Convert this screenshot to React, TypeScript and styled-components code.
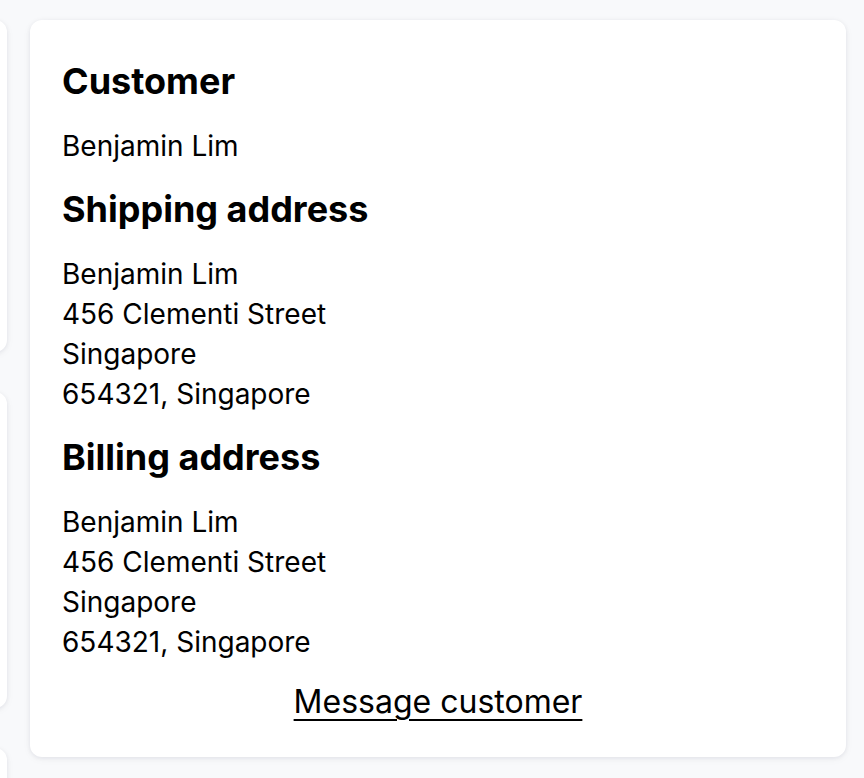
import styled, { createGlobalStyle } from "styled-components"

const GlobalStyle = createGlobalStyle`
html, body {
  margin: 0;
  padding: 0;
  background-color: #f8f9fb;
  font-family: Inter, "Noto Sans", sans-serif;
  color: #000;
}
`

const shipping = ["Benjamin Lim", "456 Clementi Street", "Singapore", "654321, Singapore"]
const billing = ["Benjamin Lim", "456 Clementi Street", "Singapore", "654321, Singapore"]

const App = () => {
    return (
        <>
            <GlobalStyle />
            <Page>
                <SideColumn>
                    <SideCard h={332} />
                    <SideCard h={316} />
                    <SideCard h={200} />
                </SideColumn>
                <Card>
                    <Title>Customer</Title>
                    <Lines>
                        <Line>Benjamin Lim</Line>
                    </Lines>
                    <Title>Shipping address</Title>
                    <Lines>
                        {shipping.map((l, i) => <Line key={i}>{l}</Line>)}
                    </Lines>
                    <Title>Billing address</Title>
                    <Lines>
                        {billing.map((l, i) => <Line key={i}>{l}</Line>)}
                    </Lines>
                    <Footer>
                        <MessageLink href="#">Message customer</MessageLink>
                    </Footer>
                </Card>
            </Page>
        </>
    )
}

export default App

const Page = styled.div`
display: flex;
align-items: flex-start;
gap: 23px;
padding: 20px 18px 0 0;
height: 758px;
overflow: hidden;
`
const SideColumn = styled.div`
width: 200px;
margin-left: -193px;
display: flex;
flex-direction: column;
gap: 40px;
flex-shrink: 0;
`
const SideCard = styled.div<{ h: number }>`
height: ${(p) => p.h}px;
background-color: #fff;
border-radius: 12px;
box-shadow: 0 1px 4px rgba(20, 30, 60, 0.08), 0 2px 10px rgba(20, 30, 60, 0.04);
`
const Card = styled.div`
flex: 1;
background-color: #fff;
border-radius: 12px;
box-shadow: 0 1px 4px rgba(20, 30, 60, 0.08), 0 2px 10px rgba(20, 30, 60, 0.04);
padding: 37px 32px 33px 32px;
display: flex;
flex-direction: column;
`
const Title = styled.h2`
margin: 0;
font-size: 36px;
font-weight: 700;
line-height: 48px;
`
const Lines = styled.div`
display: flex;
flex-direction: column;
padding: 21px 0 19px 0;
`
const Line = styled.div`
font-size: 28px;
line-height: 40px;
`
const Footer = styled.div`
display: flex;
justify-content: center;
margin-top: -1px;
`
const MessageLink = styled.a`
font-size: 32px;
line-height: 44px;
color: #000;
text-decoration: underline;
text-underline-offset: 6px;
text-decoration-thickness: 2px;
`
